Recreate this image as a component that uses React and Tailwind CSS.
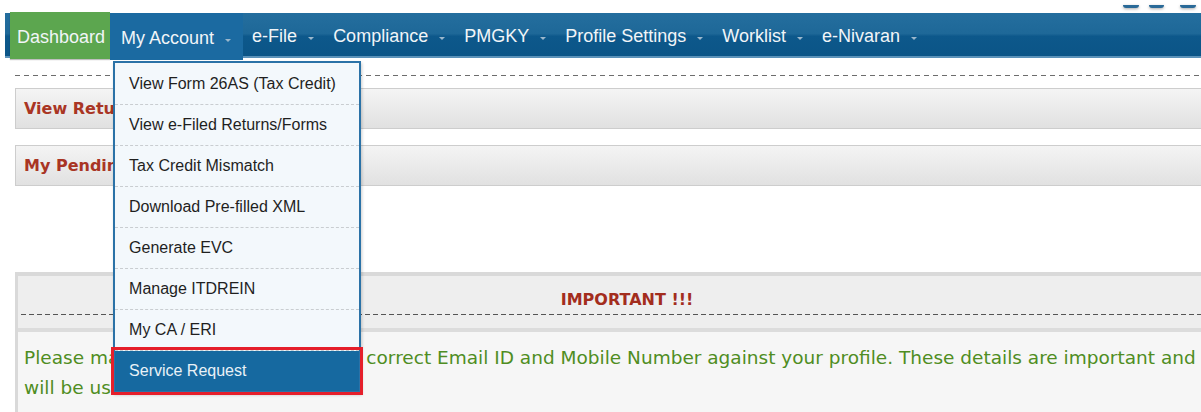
import React from "react";

const navItems = [
  { label: "e-File" },
  { label: "Compliance" },
  { label: "PMGKY" },
  { label: "Profile Settings" },
  { label: "Worklist" },
  { label: "e-Nivaran" },
];

const accountMenu = [
  "View Form 26AS (Tax Credit)",
  "View e-Filed Returns/Forms",
  "Tax Credit Mismatch",
  "Download Pre-filled XML",
  "Generate EVC",
  "Manage ITDREIN",
  "My CA / ERI",
];

const Caret = () => (
  <span className="ml-[11px] inline-block w-0 h-0 border-l-[3px] border-r-[3px] border-t-[3px] border-l-transparent border-r-transparent border-t-[#9bb7cc] translate-y-[2px]" />
);

const App = () => {
  return (
    <div className="w-[1201px] h-[412px] overflow-hidden bg-white font-['Liberation_Sans',Arial,sans-serif]">
      {/* top strip with the bottom of the header buttons */}
      <div className="h-[13px] flex justify-end items-start pr-[5px] gap-[10px]">
        <span className="mt-[5px] w-[16px] h-[3px] rounded-b bg-[#2a6a98] shadow-[0_1px_3px_rgba(0,0,0,0.35)]" />
        <span className="mt-[5px] w-[15px] h-[3px] rounded-b bg-[#2a6a98] shadow-[0_1px_3px_rgba(0,0,0,0.35)] mr-[6px]" />
        <span className="mt-[5px] w-[16px] h-[3px] rounded-b bg-[#2a6a98] shadow-[0_1px_3px_rgba(0,0,0,0.35)]" />
      </div>

      {/* main navigation */}
      <nav className="ml-[5px] h-[45px] pl-[5px] border-b-2 border-[#5b92b9] bg-[linear-gradient(to_bottom,#246e9e_0%,#1e6898_48%,#0d588b_54%,#0b5587_100%)]">
        <ul className="flex h-full text-[18px] text-[#f1f5f8]">
          <li className="h-[47px] -mt-px pl-[7px] pr-[5px] pt-[3px] bg-[#5ca64f] flex items-center shadow-[0_1px_1px_rgba(0,0,0,0.25)]">
            Dashboard
          </li>
          <li className="relative z-10 h-[47px] pl-[11px] pr-[12px] pt-[3px] bg-[#1b6aa1] flex items-center">
            My Account
            <Caret />
            {/* My Account dropdown */}
            <ul className="absolute left-[3px] top-[48px] w-[248px] bg-[#f3f8fc] border-2 border-[#2b72a7] text-[16px] text-[#1f1f1f] shadow-[1px_2px_3px_rgba(0,0,0,0.2)]">
              {accountMenu.map((item, i) => (
                <li
                  key={item}
                  className={`${i === 0 ? "h-[42px]" : "h-[41px]"} pl-[14px] flex items-center border-b border-dashed border-[#c9cdd1]`}
                >
                  {item}
                </li>
              ))}
              <li className="h-[40px] pl-[14px] flex items-center bg-[#1669a0] text-[#e9f1f7] outline-[3px] outline-[#e51f2b] outline-offset-[1px]">
                Service Request
              </li>
            </ul>
          </li>
          {navItems.map((item) => (
            <li key={item.label} className="h-full pl-[9px] pr-[10px] pt-[3px] flex items-center">
              {item.label}
              <Caret />
            </li>
          ))}
        </ul>
      </nav>

      <div className="pl-[15px]">
        {/* dashed rule under the menu */}
        <div className="mt-[17px] h-px bg-[repeating-linear-gradient(to_right,#6d6d6d_0_5px,transparent_5px_9px)]" />

        <div className="font-['DejaVu_Sans',Verdana,sans-serif] font-bold text-[16px] text-[#a93524]">
          <div className="mt-[12px] h-[41px] border border-r-0 border-[#cdcdcd] bg-[linear-gradient(to_bottom,#f4f4f4,#e1e1e1)] flex items-center pl-[8px]">
            View Returns / Forms
          </div>
          <div className="mt-[16px] h-[41px] border border-r-0 border-[#cdcdcd] bg-[linear-gradient(to_bottom,#f4f4f4,#e1e1e1)] flex items-center pl-[8px]">
            My Pending Actions
          </div>
        </div>

        {/* important notice box */}
        <div className="mt-[86px] border-t-4 border-l-[3px] border-[#d9d9d9] bg-[#f6f6f6]">
          <div className="bg-[#eeeeee] pl-[3px] pt-[12px]">
            <div className="text-center pl-[32px] pb-[2px] font-['DejaVu_Sans',Verdana,sans-serif] font-bold text-[16px] text-[#a32d1d]">
              IMPORTANT !!!
            </div>
            <div className="h-px bg-[repeating-linear-gradient(to_right,#555_0_5px,transparent_5px_8px)]" />
            <div className="h-[13px]" />
          </div>
          <div className="h-[4px] bg-[#dcdcdc]" />
          <p className="pl-[6px] pt-[11px] pb-[20px] leading-[30px] text-[18.5px] text-[#4f8d22] font-['DejaVu_Sans',Verdana,sans-serif]">
            Please make sure you have updated correct Email ID and Mobile Number against your profile. These details are important and
            will be used for all communications.
          </p>
        </div>
      </div>
    </div>
  );
};

export default App;
